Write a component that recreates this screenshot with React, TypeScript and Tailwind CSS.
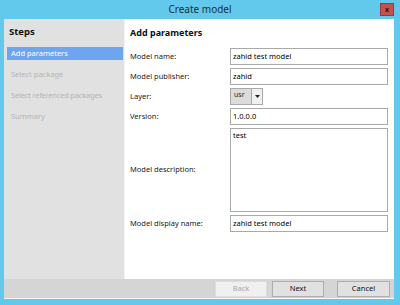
import React from "react";

const font = { fontFamily: '"Noto Sans", "Open Sans", sans-serif' };

function Row({ label, children, h = "h-[17px]" }: { label: string; children: React.ReactNode; h?: string }) {
  return (
    <div className={`flex items-center ${h}`}>
      <div className="w-[100px] text-[7.5px] text-[#1a1a1a]">{label}</div>
      <div className="flex-1 h-full">{children}</div>
    </div>
  );
}

function Field({ value }: { value: string }) {
  return (
    <div className="h-full w-[158px] border border-[#a9a9a9] bg-white flex items-center px-[2px] text-[7.5px] text-black">
      {value}
    </div>
  );
}

export default function App() {
  return (
    <div className="w-[400px] h-[305px] bg-[#62c9ec] flex flex-col overflow-hidden" style={font}>
      <div className="h-[19px] relative flex items-center justify-center">
        <span className="text-[10px] text-[#1c2f3a]">Create model</span>
        <div className="absolute left-[380px] top-[3px] w-[14px] h-[13px] bg-[#c75050] border border-[#9a3a3a] flex items-center justify-center">
          <span className="text-[7px] font-bold text-[#3a1010] leading-none">x</span>
        </div>
      </div>
      <div className="ml-[4px] w-[390px] h-[260px] flex">
        <div className="w-[120px] bg-[#e1e1e1] flex flex-col">
          <div className="pl-[5px] pt-[6px] h-[28px] text-[9.5px] font-bold text-[#111]">Steps</div>
          <div className="flex flex-col gap-[8px] pl-[3px] pr-[1px]">
            <div className="h-[13px] bg-[#6fa5f0] text-white text-[7.5px] flex items-center pl-[4px]">Add parameters</div>
            <div className="h-[13px] text-[#b4b4b4] text-[7.5px] flex items-center pl-[4px]">Select package</div>
            <div className="h-[13px] text-[#b4b4b4] text-[7.5px] flex items-center pl-[4px] tracking-[-0.2px]">Select referenced packages</div>
            <div className="h-[13px] text-[#b4b4b4] text-[7.5px] flex items-center pl-[4px]">Summary</div>
          </div>
        </div>
        <div className="w-[1px] bg-[#f4f4f4]" />
        <div className="flex-1 bg-white pl-[5px] pr-[6px]">
          <div className="h-[29px] pt-[7px] text-[9px] font-bold text-[#111]">Add parameters</div>
          <div className="flex flex-col gap-[3px]">
            <Row label="Model name:"><Field value="zahid test model" /></Row>
            <Row label="Model publisher:"><Field value="zahid" /></Row>
            <Row label="Layer:">
              <div className="h-full w-[33px] border border-[#a9a9a9] flex">
                <div className="w-[21px] bg-[#dcdcdc] border-r border-[#a9a9a9] text-[7px] flex items-start pl-[3px] pt-[1px] text-[#222]">usr</div>
                <div className="flex-1 bg-[#f0f0f0] flex items-center justify-center">
                  <svg width="5" height="3" viewBox="0 0 5 3"><path d="M0 0 H5 L2.5 3 Z" fill="#222" /></svg>
                </div>
              </div>
            </Row>
            <Row label="Version:"><Field value="1.0.0.0" /></Row>
            <Row label="Model description:" h="h-[84px]">
              <div className="h-full w-[158px] border border-[#a9a9a9] bg-white px-[2px] pt-[1px] text-[7.5px] text-black leading-[10px]">test</div>
            </Row>
            <Row label="Model display name:"><Field value="zahid test model" /></Row>
          </div>
        </div>
      </div>
      <div className="ml-[4px] w-[390px] h-[20px] bg-[#d5d5d5] border-b border-[#f6f6f6] flex items-center justify-end pr-[4px]">
        <div className="w-[52px] h-[16px] bg-[#f0f0f0] border border-[#dcdcdc] text-[7.5px] text-[#a8a8a8] flex items-center justify-center">Back</div>
        <div className="ml-[5px] w-[52px] h-[16px] bg-[#e1e1e1] border border-[#adadad] text-[7.5px] text-[#111] flex items-center justify-center">Next</div>
        <div className="ml-[13px] w-[53px] h-[16px] bg-[#e1e1e1] border border-[#adadad] text-[7.5px] text-[#111] flex items-center justify-center">Cancel</div>
      </div>
    </div>
  );
}
